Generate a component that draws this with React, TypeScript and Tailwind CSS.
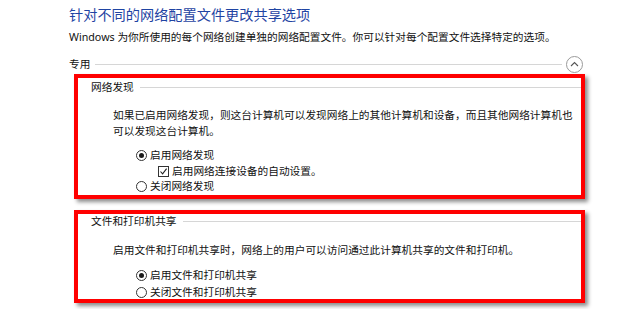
import React from "react";

const Radio = ({ checked }: { checked?: boolean }) => (
  <span className="w-[11px] h-[11px] rounded-full border border-[#333] bg-white flex items-center justify-center shrink-0">
    {checked && <span className="w-[5px] h-[5px] rounded-full bg-[#1a1a1a]" />}
  </span>
);

const Check = () => (
  <span className="w-[11px] h-[11px] border border-[#333] bg-white flex items-center justify-center shrink-0">
    <svg width="9" height="9" viewBox="0 0 9 9">
      <path d="M1.5 4.5 L3.6 6.8 L7.6 1.6" fill="none" stroke="#222" strokeWidth="1.1" />
    </svg>
  </span>
);

export default function App() {
  return (
    <div
      className="w-[620px] h-[309px] bg-white overflow-hidden pl-[69px] text-[#111]"
      style={{ fontFamily: '"Noto Sans", "Noto Sans CJK SC", sans-serif' }}
    >
      <div className="pt-[5px] text-[14.2px] leading-[20px] text-[#1f44a3]">
        针对不同的网络配置文件更改共享选项
      </div>
      <div className="mt-[4px] text-[10.7px] leading-[16px] whitespace-nowrap">
        Windows 为你所使用的每个网络创建单独的网络配置文件。你可以针对每个配置文件选择特定的选项。
      </div>
      <div className="mt-[11px] h-[17px] flex items-center mr-[37px]">
        <span className="text-[10.7px] leading-[16px] -mt-[2px]">专用</span>
        <span className="flex-1 h-px bg-[#d6d6d6] ml-[5px] mr-[4px]" />
        <span className="w-[17px] h-[17px] rounded-full border border-[#9a9a9a] flex items-center justify-center">
          <svg width="11" height="11" viewBox="0 0 11 11">
            <path d="M2 7 L5.5 3.5 L9 7" fill="none" stroke="#555" strokeWidth="1.1" />
          </svg>
        </span>
      </div>

      <div className="mt-[1px] ml-[5px] w-[511px] h-[125px] border-4 border-[#ff0000] shadow-[3px_3px_4px_rgba(0,0,0,0.45)] text-[10.7px] overflow-hidden">
        <div className="pt-[1px] pl-[13px] h-[17px] flex items-center leading-[16px]">
          <span>网络发现</span>
          <span className="flex-1 h-px bg-[#d6d6d6] ml-[6px]" />
        </div>
        <div className="mt-[12px] pl-[35px] pr-[8px] leading-[16px]">
          如果已启用网络发现，则这台计算机可以发现网络上的其他计算机和设备，而且其他网络计算机也
          <br />
          可以发现这台计算机。
        </div>
        <div className="mt-[9px] pl-[58px] leading-[15.6px]">
          <div className="flex items-center h-[15.6px] gap-[3px]">
            <Radio checked />
            <span>启用网络发现</span>
          </div>
          <div className="flex items-center h-[15.6px] gap-[3px] pl-[22px]">
            <Check />
            <span>启用网络连接设备的自动设置。</span>
          </div>
          <div className="flex items-center h-[15.6px] gap-[3px]">
            <Radio />
            <span>关闭网络发现</span>
          </div>
        </div>
      </div>

      <div className="mt-[11px] ml-[5px] w-[511px] h-[93px] border-4 border-[#ff0000] shadow-[3px_3px_4px_rgba(0,0,0,0.45)] text-[10.7px] overflow-hidden">
        <div className="pl-[13px] h-[14px] flex items-center leading-[14px]">
          <span>文件和打印机共享</span>
          <span className="flex-1 h-px bg-[#d6d6d6] ml-[6px]" />
        </div>
        <div className="mt-[14px] pl-[35px] leading-[16px]">
          启用文件和打印机共享时，网络上的用户可以访问通过此计算机共享的文件和打印机。
        </div>
        <div className="mt-[9px] pl-[58px]">
          <div className="flex items-center h-[17px] gap-[3px]">
            <Radio checked />
            <span>启用文件和打印机共享</span>
          </div>
          <div className="flex items-center h-[17px] gap-[3px]">
            <Radio />
            <span>关闭文件和打印机共享</span>
          </div>
        </div>
      </div>
    </div>
  );
}
